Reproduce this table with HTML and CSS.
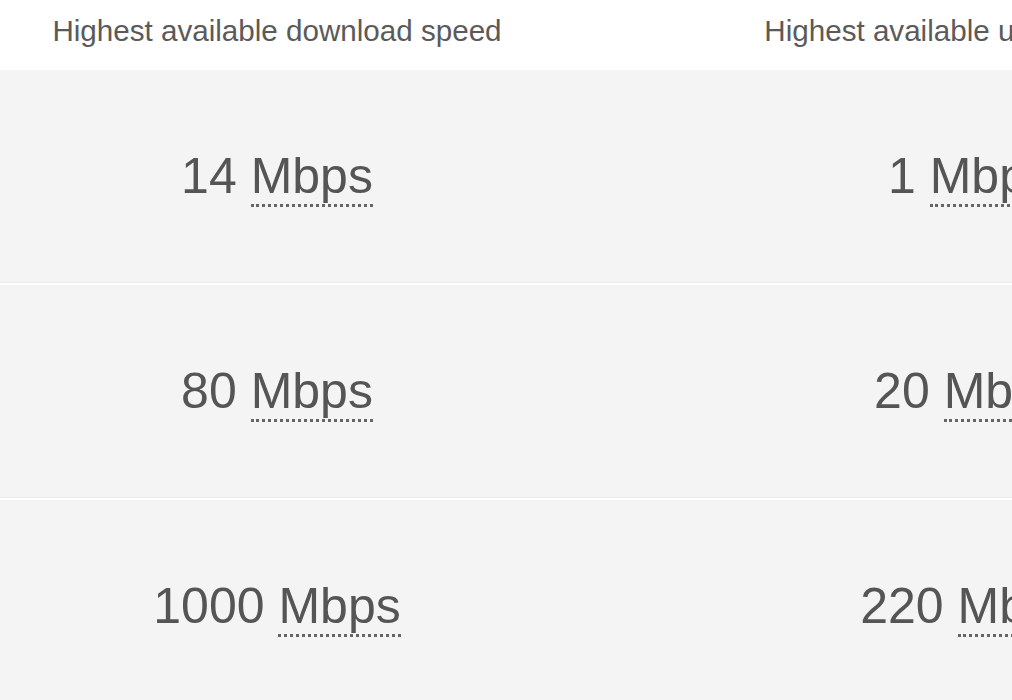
FILE: index.html
```html
<!DOCTYPE html>
<html>
<head>
<meta charset="utf-8">
<link rel="stylesheet" href="styles.css">
</head>
<body>
<div class="table">
  <div class="row head">
    <div class="cell c1">Highest available download speed</div>
    <div class="cell c2">Highest available upload speed</div>
  </div>
  <div class="row body">
    <div class="cell c1">14 <abbr class="unit">Mbps</abbr></div>
    <div class="cell c2">1 <abbr class="unit">Mbps</abbr></div>
  </div>
  <div class="row body">
    <div class="cell c1">80 <abbr class="unit">Mbps</abbr></div>
    <div class="cell c2">20 <abbr class="unit">Mbps</abbr></div>
  </div>
  <div class="row body">
    <div class="cell c1">1000 <abbr class="unit">Mbps</abbr></div>
    <div class="cell c2">220 <abbr class="unit">Mbps</abbr></div>
  </div>
</div>
</body>
</html>
```
FILE: styles.css
```css
html, body {
  margin: 0;
  padding: 0;
  background: #fff;
  overflow: hidden;
}
body {
  width: 1012px;
  height: 700px;
  font-family: "Liberation Sans", Arial, sans-serif;
  color: #555;
}
.table {
  display: flex;
  flex-direction: column;
  width: 1386px;
}
.row {
  display: grid;
  grid-template-columns: 554px 832px;
  align-items: center;
}
.cell {
  text-align: center;
  white-space: nowrap;
}
.head {
  height: 70px;
  font-size: 29.6px;
  color: #5a5a5a;
}
.head .cell {
  padding-bottom: 8px;
}
.body {
  height: 212px;
  background: #f4f4f4;
  border-bottom: 1px solid #ebebeb;
  margin-bottom: 2px;
  font-size: 50px;
  color: #555;
}
.unit {
  text-decoration: none;
  border-bottom: 3px dotted #666;
}
```
